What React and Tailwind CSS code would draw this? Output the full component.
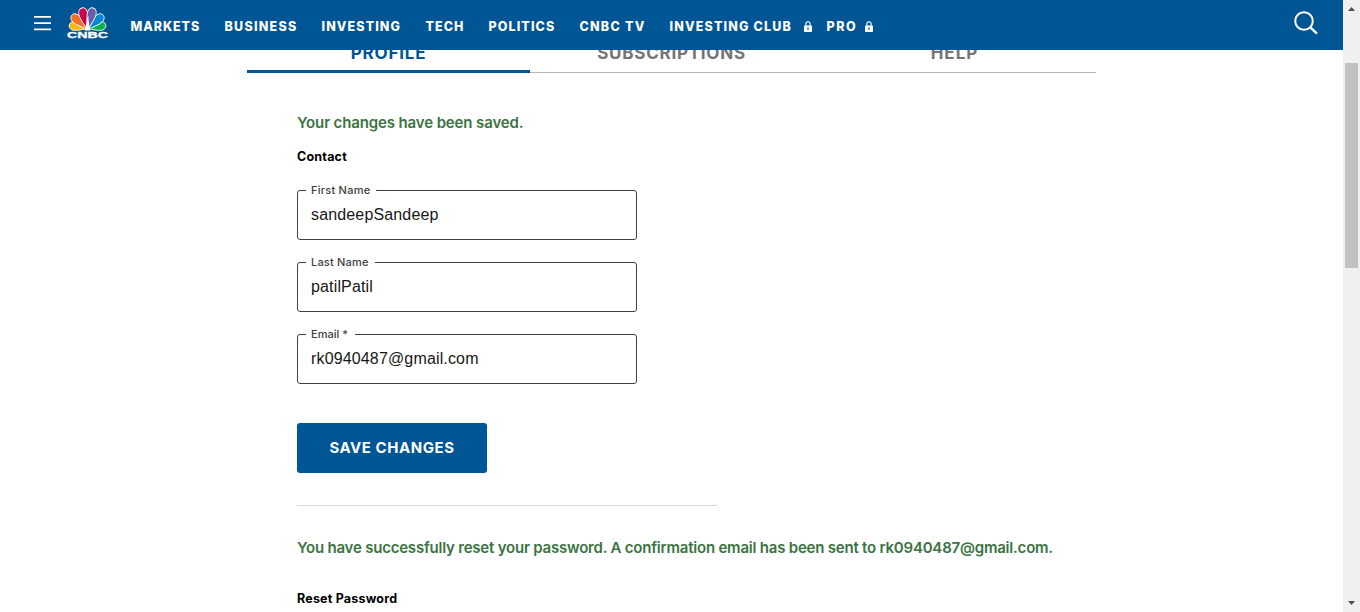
const NAV = [
  { label: "MARKETS", box: "w-[94px]", track: "tracking-[0.9px]" },
  { label: "BUSINESS", box: "w-[97px]", track: "tracking-[1.25px]" },
  { label: "INVESTING", box: "w-[104px]", track: "tracking-[1.1px]" },
  { label: "TECH", box: "w-[63px]", track: "tracking-[1.05px]" },
  { label: "POLITICS", box: "w-[91px]", track: "tracking-[1.1px]" },
  { label: "CNBC TV", box: "w-[90px]", track: "tracking-[1.25px]" },
  { label: "INVESTING CLUB", box: "w-[157px]", track: "tracking-[1.17px]", lock: true },
  { label: "PRO", box: "w-[46px]", track: "tracking-[1.5px]", lock: true },
];

function Lock() {
  return (
    <svg className="h-[11px] w-2 shrink-0" viewBox="0 0 8 11" fill="none">
      <path d="M1.9 5V2.9a2.1 2.1 0 0 1 4.2 0V5" stroke="white" strokeWidth="1.1" />
      <rect y="4.4" width="8" height="6.6" rx=".7" fill="white" />
      <path d="M4 6.4v2.3" stroke="#005594" strokeWidth="1.3" />
    </svg>
  );
}

function Logo() {
  const feather = "M0 0 C-1 -4 -4.2 -9 -4.2 -13 C-4.2 -19.5 4.2 -19.5 4.2 -13 C4.2 -9 1 -4 0 0Z";
  const feathers = [
    { fill: "#fcb711", at: "translate(20 24) rotate(-77) scale(1.02 1.02)" },
    { fill: "#0db14b", at: "translate(21 24) rotate(77) scale(1.02 1.02)" },
    { fill: "#f37021", at: "translate(20 24.5) rotate(-46) scale(1.05 1.17)" },
    { fill: "#0089d0", at: "translate(21 24.5) rotate(46) scale(1.05 1.17)" },
    { fill: "#cc004c", at: "translate(20.2 25) rotate(-13.5) scale(1.05 1.27)" },
    { fill: "#6460aa", at: "translate(20.8 25) rotate(13.5) scale(1.05 1.27)" },
  ];
  return (
    <svg className="h-[34px] w-[42px] shrink-0" viewBox="0 0 42 34">
      {feathers.map(({ fill, at }) => (
        <path key={fill} d={feather} transform={at} fill={fill} stroke="white" strokeWidth=".8" />
      ))}
      <path d="M20 13 L21.5 11 L21.5 15 L23 25.6 H18Z" fill="white" />
      <text
        x="0"
        y="33"
        textLength="41"
        lengthAdjust="spacingAndGlyphs"
        fill="white"
        stroke="white"
        strokeWidth=".3"
        className="font-['Liberation_Sans'] text-[8.7px] font-bold"
      >
        CNBC
      </text>
    </svg>
  );
}

function Field({ label, value, notch, track }) {
  return (
    <div className="relative mb-[22px] h-[50px] w-[340px] rounded-[3px] border border-[#404040] pl-[13px]">
      <span className={`absolute -top-[9px] left-2 h-4 bg-white pl-[5px] text-[11px] leading-4 font-medium whitespace-nowrap text-[#404040] ${notch} ${track}`}>
        {label}
      </span>
      <div className="pt-3 font-['Liberation_Sans',sans-serif] text-base leading-6 tracking-[0.15px] text-[#171717]">{value}</div>
    </div>
  );
}

export default function App() {
  return (
    <div className="flex h-[612px] w-[1360px] overflow-hidden bg-white font-['Inter',sans-serif]">
      <div className="flex w-[1343px] flex-col">
        <header className="flex h-[50px] shrink-0 items-start bg-[#005594] text-white">
          <svg className="mt-4 ml-[34px] h-[15px] w-[17px] shrink-0" viewBox="0 0 17 15">
            <path d="M0 .9h17M0 7.1h17M0 13.3h17" stroke="white" strokeWidth="1.8" />
          </svg>
          <div className="mt-[5px] ml-4"><Logo /></div>
          <nav className="mt-[17px] ml-[21.5px] flex flex-1 text-[12.5px] leading-5 font-extrabold whitespace-nowrap">
            {NAV.map((n) => (
              <a key={n.label} className={`flex shrink-0 items-center ${n.box}`}>
                <span className={n.track}>{n.label}</span>
                {n.lock && <span className={n.label === "PRO" ? "ml-auto pb-px" : "mr-[15px] ml-auto pb-px"}><Lock /></span>}
              </a>
            ))}
          </nav>
          <svg className="mt-[11px] mr-[25px] h-6 w-6 shrink-0" viewBox="0 0 24 24" fill="none" stroke="white">
            <circle cx="10" cy="10" r="8.8" strokeWidth="2" />
            <path d="M16.3 16.3 23 22.6" strokeWidth="2.4" />
          </svg>
        </header>
        <main className="flex min-h-0 flex-1 flex-col overflow-hidden">
          <div className="ml-[247px] grid h-[23px] w-[849px] shrink-0 grid-cols-3 overflow-hidden text-center text-[17px] leading-6 font-bold text-[#747474]">
            <div className="border-b-[3px] border-[#005594] text-[#005594]"><div className="-mt-[9px] tracking-[0.8px]">PROFILE</div></div>
            <div className="border-b border-[#b5b5b5]"><div className="-mt-[9px] tracking-[0.75px]">SUBSCRIPTIONS</div></div>
            <div className="border-b border-[#b5b5b5]"><div className="-mt-[9px] tracking-[1px]">HELP</div></div>
          </div>
          <section className="ml-[297px] pt-[38px]">
            <p className="text-[15px] leading-6 font-semibold text-[#3b7341]"><span className="tracking-[-0.13px]">Your changes have been saved.</span></p>
            <h2 className="mt-3 mb-[23px] text-[12.5px] leading-5 font-bold text-black"><span className="tracking-[0.2px]">Contact</span></h2>
            <Field label="First Name" value="sandeepSandeep" notch="w-[70px]" track="tracking-[0.25px]" />
            <Field label="Last Name" value="patilPatil" notch="w-[69px]" track="tracking-[0.2px]" />
            <Field label="Email *" value="rk0940487@gmail.com" notch="w-[49px]" track="tracking-[0px]" />
            <button className="mt-[39px] block h-[50px] w-[190px] rounded-[3px] bg-[#005594] text-[15px] font-bold text-white"><span className="tracking-[0.55px]">SAVE CHANGES</span></button>
            <hr className="mt-8 w-[420px] border-[#d8d8d8]" />
            <p className="mt-[30px] text-[15px] leading-6 font-semibold whitespace-nowrap text-[#3b7341]"><span className="tracking-[-0.21px]">You have successfully reset your password. A confirmation email has been sent to rk0940487@gmail.com.</span></p>
            <h2 className="mt-[29px] text-[12.5px] leading-5 font-bold text-black"><span className="tracking-[0.2px]">Reset Password</span></h2>
          </section>
        </main>
      </div>
      <aside className="flex w-[17px] flex-col items-center bg-[#f0f0f0]">
        <svg className="mt-[7px] h-1 w-[7px] shrink-0" viewBox="0 0 7 4"><path d="M0 4 3.5 0 7 4Z" fill="#505050" /></svg>
        <div className="mt-[52px] h-[205px] w-[13px] shrink-0 bg-[#c1c1c1]" />
        <svg className="mt-auto mb-[7px] h-1 w-[7px] shrink-0" viewBox="0 0 7 4"><path d="M0 0h7L3.5 4Z" fill="#505050" /></svg>
      </aside>
    </div>
  );
}
